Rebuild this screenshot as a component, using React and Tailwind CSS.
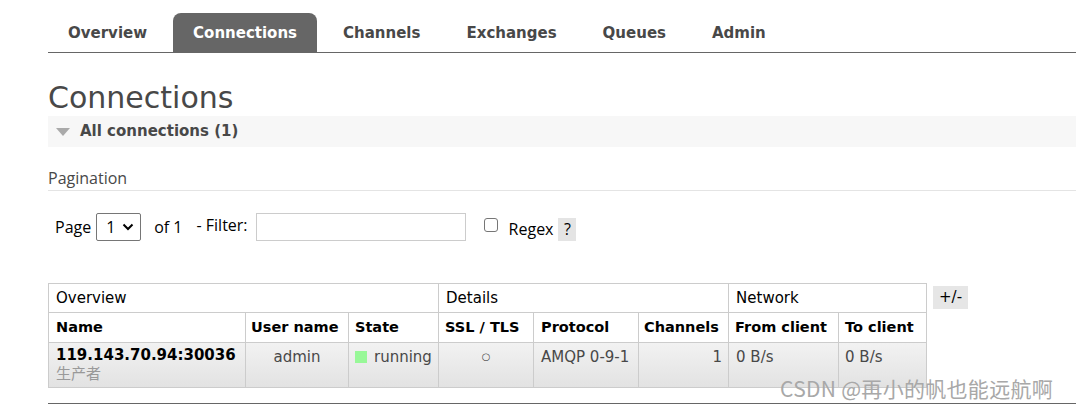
import React from "react";

const tabs = ["Overview", "Connections", "Channels", "Exchanges", "Queues", "Admin"];
const cols = [197, 103, 90, 95, 105, 90, 110, 88];

export default function App() {
  const font = { fontFamily: '"DejaVu Sans", Verdana, sans-serif' };
  return (
    <div className="relative w-[1076px] h-[408px] overflow-hidden bg-white text-[#484848]" style={font}>
      <div className="pl-12">
        {/* Tabs */}
        <nav className="flex items-end h-[53px] border-b border-[#666]">
          {tabs.map((t) => (
            <div
              key={t}
              className={`h-[39px] px-5 mr-[6px] flex items-center pt-[1px] text-[15px] font-bold rounded-t-lg ${
                t === "Connections" ? "bg-[#666] text-white" : "text-[#484848]"
              }`}
            >
              {t}
            </div>
          ))}
        </nav>

        <h1 className="mt-[27px] text-[30px] leading-[36px] text-[#484848]">Connections</h1>

        {/* Section */}
        <div className="h-[31px] bg-[#f7f7f7] flex items-center pl-2">
          <span className="w-0 h-0 border-l-[7px] border-r-[7px] border-t-[8px] border-l-transparent border-r-transparent border-t-[#aaa] mr-[10px]" />
          <span className="text-[15px] font-bold text-[#484848]">All connections (1)</span>
        </div>

        {/* Pagination */}
        <div style={{ fontFamily: '"Open Sans", "Noto Sans", sans-serif' }}>
          <div className="mt-[20px] pb-[1px] border-b border-[#e4e4e4] text-[16px] text-[#484848] leading-[22px]">Pagination</div>
          <div className="flex items-center mt-[22px] pl-[7px] text-[16px] text-black">
            <span>Page</span>
            <div className="ml-[5px] w-[45px] h-[28px] border border-[#767676] rounded-[2px] flex items-center justify-between pl-[9px] pr-[6px]">
              <span>1</span>
              <svg width="12" height="8" viewBox="0 0 12 8"><path d="M1.5 1.5 L6 6 L10.5 1.5" fill="none" stroke="#000" strokeWidth="2" /></svg>
            </div>
            <span className="ml-[13px]">of 1</span>
            <span className="ml-[14px] -mt-[4px]">- Filter:</span>
            <div className="ml-[8px] w-[210px] h-[28px] border border-[#cccccc]" />
            <div className="ml-[18px] w-[14px] h-[14px] border border-[#767676] rounded-[3px] -mt-[4px]" />
            <span className="ml-[11px] mt-[4px]">Regex</span>
            <span className="ml-[5px] mt-[4px] w-[18px] h-[23px] bg-[#e4e4e4] flex items-center justify-center">?</span>
          </div>
        </div>

        {/* Table */}
        <div className="flex items-start mt-[42px]">
          <table className="w-[878px] table-fixed border-collapse text-[15px] text-black whitespace-nowrap" style={font}>
            <colgroup>
              {cols.map((w, i) => (
                <col key={i} style={{ width: w }} />
              ))}
            </colgroup>
            <thead>
              <tr className="h-[29px]">
                <th colSpan={3} className="border border-[#ccc] px-[7px] text-left font-normal">Overview</th>
                <th colSpan={3} className="border border-[#ccc] px-[7px] text-left font-normal">Details</th>
                <th colSpan={2} className="border border-[#ccc] px-[7px] text-left font-normal">Network</th>
              </tr>
              <tr className="h-[30px] font-bold text-[14.5px]">
                <th className="border border-[#ccc] px-[7px] text-left">Name</th>
                <th className="border border-[#ccc] px-[5px] text-left">User name</th>
                <th className="border border-[#ccc] px-[6px] text-left">State</th>
                <th className="border border-[#ccc] px-[6px] text-left">SSL / TLS</th>
                <th className="border border-[#ccc] px-[7px] text-left">Protocol</th>
                <th className="border border-[#ccc] px-[5px] text-left">Channels</th>
                <th className="border border-[#ccc] px-[6px] text-left">From client</th>
                <th className="border border-[#ccc] px-[6px] text-left">To client</th>
              </tr>
            </thead>
            <tbody>
              <tr className="h-[45px] bg-gradient-to-b from-[#f2f2f2] to-[#e2e2e2] align-top text-[#484848]">
                <td className="border border-[#ccc] px-[7px] pt-[3px] leading-[19px]">
                  <div className="font-bold text-black text-[15px]">119.143.70.94:30036</div>
                  <div className="text-[15px] text-[#999]" style={{ fontFamily: '"DejaVu Sans", "Noto Sans CJK SC", sans-serif' }}>生产者</div>
                </td>
                <td className="border border-[#ccc] px-[6px] pt-[3px] text-center">admin</td>
                <td className="border border-[#ccc] px-[6px] pt-[3px]">
                  <span className="inline-flex items-center">
                    <span className="inline-block w-[12px] h-[12px] bg-[#98f898] mr-[7px]" />
                    running
                  </span>
                </td>
                <td className="border border-[#ccc] px-[6px] pt-[4px] text-center text-[10px] leading-[20px]">○</td>
                <td className="border border-[#ccc] px-[7px] pt-[3px]">AMQP 0-9-1</td>
                <td className="border border-[#ccc] px-[6px] pt-[3px] text-right">1</td>
                <td className="border border-[#ccc] px-[7px] pt-[3px]">0 B/s</td>
                <td className="border border-[#ccc] px-[6px] pt-[3px]">0 B/s</td>
              </tr>
            </tbody>
          </table>
          <span className="ml-[6px] mt-[3px] w-[35px] h-[23px] bg-[#e6e6e6] text-[15px] text-black flex items-center justify-center">+/-</span>
        </div>

        <div className="mt-[15px] border-t border-[#666]" />
      </div>

      <div
        className="absolute left-[780px] top-[374px] text-[21px] leading-[28px] text-[#a8a8a8] tracking-[0.3px]"
        style={{ fontFamily: '"Noto Sans CJK SC", sans-serif' }}
      >
        CSDN @再小的帆也能远航啊
      </div>
    </div>
  );
}
